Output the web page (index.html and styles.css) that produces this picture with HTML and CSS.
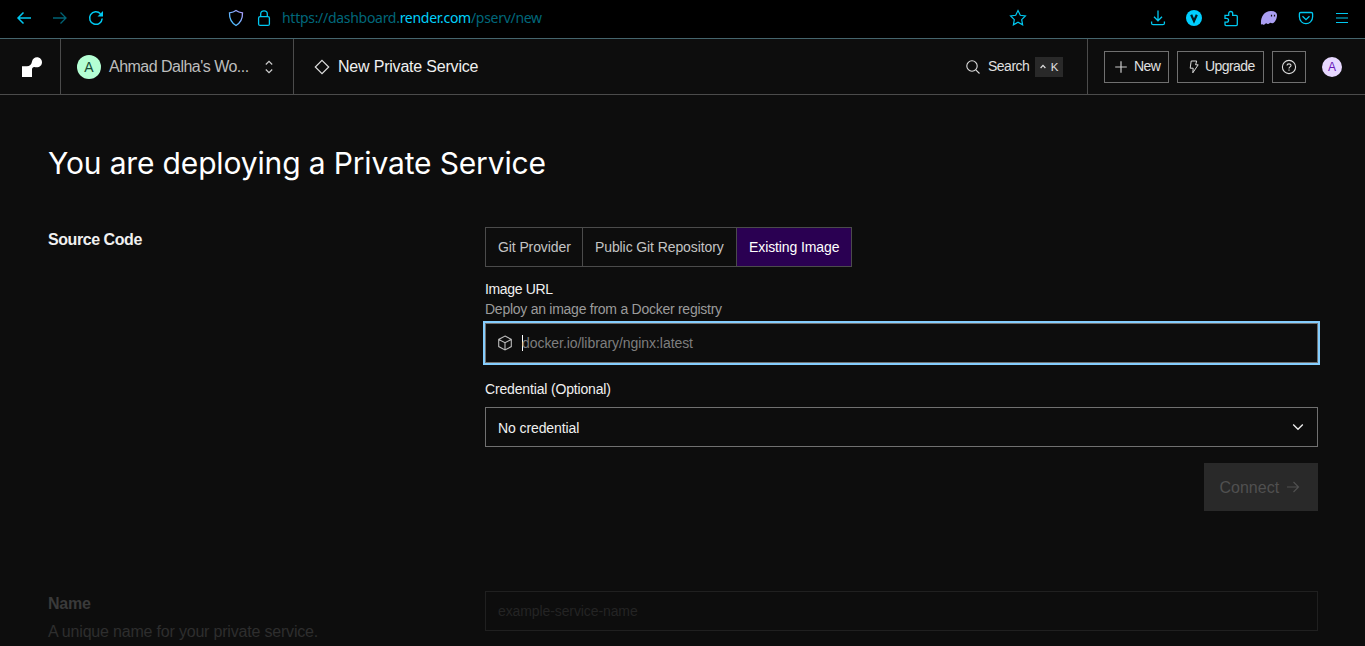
FILE: index.html
```html
<!DOCTYPE html>
<html lang="en">
<head>
<meta charset="utf-8">
<title>New Private Service</title>
<link rel="stylesheet" href="styles.css">
</head>
<body>
<div class="browser">
  <div class="nav-icons">
    <svg class="cyan" width="16" height="16" viewBox="0 0 16 16"><path d="M15 8H2M7.500 2.500 2 8l5.500 5.500" stroke-width="1.500"/></svg>
    <svg class="dim" width="16" height="16" viewBox="0 0 16 16"><path d="M1 8h13M8.500 2.500 14 8l-5.500 5.500" stroke-width="1.300"/></svg>
    <svg class="cyan" width="16" height="16" viewBox="0 0 16 16"><path d="M14.200 8.500A6.300 6.300 0 1 1 12.500 3.700" stroke-width="1.500"/><path class="solid" d="M15 1v5.500H9.500z"/></svg>
  </div>
  <div class="site-icons">
    <svg width="16" height="18" viewBox="0 0 16 18"><defs><linearGradient id="sg" x1="0" y1="1" x2="1" y2="0"><stop offset="0" stop-color="#35c5ff"/><stop offset="1" stop-color="#b59cff"/></linearGradient></defs><path d="M8 1.500c2 1.500 4 2 6.500 2.300.2 6-1.500 9.800-6.500 12.700C3 13.600 1.300 9.800 1.500 3.800 4 3.500 6 3 8 1.500z" stroke="url(#sg)" stroke-width="1.300"/></svg>
    <svg class="cyan" width="14" height="18" viewBox="0 0 14 18"><rect x="1.600" y="7.600" width="10.800" height="8.800" rx="1.500" stroke-width="1.300"/><path d="M3.700 7.500V4.800C3.700.8 10.300.8 10.300 4.800v2.700" stroke-width="1.300"/></svg>
  </div>
  <div class="url">https://dashboard.<span>render.com</span>/pserv/new</div>
  <svg class="cyan star" width="18" height="18" viewBox="0 0 18 18"><path d="m9 1.600 2.300 4.700 5.100.7-3.700 3.600.9 5.200L9 13.300l-4.600 2.500.9-5.200L1.600 7l5.100-.7z" stroke-width="1.200"/></svg>
  <div class="ext-icons">
    <svg class="cyan" width="16" height="16" viewBox="0 0 16 16"><path d="M8 .5v10M4 6.800l4 4 4-4M1.600 11.500v1.700c0 1 .5 1.500 1.500 1.500h9.800c1 0 1.500-.5 1.500-1.500v-1.700" stroke-width="1.300"/></svg>
    <svg width="16" height="16" viewBox="0 0 16 16"><circle cx="8" cy="8" r="8" fill="#00cfff"/><path d="M5.200 4.800 8 11l2.800-6.200" stroke="#001b22" stroke-width="2.200"/></svg>
    <svg class="cyan" width="16" height="17" viewBox="0 0 16 17"><path d="M2 5.300h3.700V3.500c0-2.700 4-2.700 4 0v1.800h3.500c.7 0 1.100.4 1.100 1.100v8.100c0 .7-.4 1.100-1.100 1.100H3.100c-.7 0-1.100-.4-1.100-1.100v-2.300h1.600c2.600 0 2.600-3.800 0-3.800H2z" stroke-width="1.300"/></svg>
    <svg width="18" height="16" viewBox="0 0 18 16"><path d="M1 14.500C.5 7 4 1 11 1c4 0 6 1.700 6 4 0 4-2 7.500-4.500 8.300-1 .3-1.500-.5-2.300-.5-.8.100-1 1.300-2 1.300s-1.200-.8-2-.8-1.400 1.400-2.400 1.400-1.200-.6-1.800-.5z" fill="#ab9ff2"/><path d="M11.500 4.800v1.800M14.500 4.800v1.800" stroke="#111" stroke-width="1.200"/></svg>
    <svg class="cyan" width="16" height="16" viewBox="0 0 16 16"><path d="M2.700 2.500h10.600c.8 0 1.300.5 1.300 1.300v3c0 9-13.200 9-13.200 0v-3c0-.8.500-1.300 1.300-1.300zM4.500 6.300 8 9.600l3.500-3.300" stroke-width="1.300"/></svg>
    <svg class="cyan" width="14" height="14" viewBox="0 0 14 14"><path d="M1 2.500h12M1 7h12M1 11.500h12" stroke-width="1.200"/></svg>
  </div>
</div>

<header class="header">
  <div class="logo"><svg width="20" height="20" viewBox="0 0 20 20"><path d="M15 .2C12.500.2 10.400 2 10 4.500 9.600 7.300 7.600 9.300 4.900 9.300H0V20h10v-7.500c0-1.500 1-2.600 2.400-2.500C17 11 20 8.700 20 5.200 20 2.400 17.800.2 15 .2z" fill="#fff"/></svg></div>
  <div class="workspace">
    <span class="avatar green">A</span>
    <span class="ws-name">Ahmad Dalha's Wo...</span>
    <svg width="8" height="14" viewBox="0 0 8 14"><path d="M.8 4.500 4 1.300l3.200 3.200M.8 9.500 4 12.700l3.200-3.200" stroke="#ccc" stroke-width="1.200"/></svg>
  </div>
  <div class="crumb">
    <svg width="16" height="16" viewBox="0 0 16 16"><path d="M8 1.300 14.700 8 8 14.700 1.300 8z" stroke="#ddd" stroke-width="1.200"/></svg>
    <span class="crumb-text">New Private Service</span>
  </div>
  <div class="search">
    <svg width="14" height="14" viewBox="0 0 14 14"><circle cx="6" cy="6" r="5.200" stroke="#ddd" stroke-width="1.100"/><path d="m9.800 9.800 3.700 3.700" stroke="#ddd" stroke-width="1.100"/></svg>
    <span class="search-text">Search</span>
    <span class="kbd"><svg width="6" height="5" viewBox="0 0 6 5"><path d="m.6 4 2.400-2.700L5.400 4" stroke="#ddd" stroke-width="1.200"/></svg>K</span>
  </div>
  <div class="actions">
    <span class="btn new"><svg width="12" height="12" viewBox="0 0 12 12"><path d="M6 .2v11.600M.2 6h11.600" stroke="#ccc" stroke-width="1.200"/></svg><span class="new-text">New</span></span>
    <span class="btn upgrade"><svg width="12" height="14" viewBox="0 0 12 14"><path d="M3.200 1h5.500L7.600 4.800h2.600L4.800 12.800l.4-4.600H2.200z" stroke="#ddd"/></svg><span class="upgrade-text">Upgrade</span></span>
    <span class="btn help"><svg width="16" height="16" viewBox="0 0 16 16"><circle cx="8" cy="8" r="6.600" stroke="#ddd" stroke-width="1.100"/><path d="M6 6.600C6 4.300 10 4.300 10 6.500c0 1.500-2 1.300-2 2.900M8 10.500v1.200" stroke="#ddd" stroke-width="1.100"/></svg></span>
    <span class="avatar lilac">A</span>
  </div>
</header>

<main>
  <h1>You are deploying a Private Service</h1>
  <section class="row source">
    <h2 class="source-title">Source Code</h2>
    <div class="fields">
      <div class="tabs"><span class="tab t1">Git Provider</span><span class="tab t2">Public Git Repository</span><span class="tab t3 active">Existing Image</span></div>
      <div class="label url-label">Image URL</div>
      <div class="hint">Deploy an image from a Docker registry</div>
      <div class="input focused">
        <svg width="16" height="16" viewBox="0 0 16 16"><path d="M8 1.100 14.300 4.400v7.200L8 14.900l-6.300-3.300V4.400zM1.700 4.400 8 7.700l6.300-3.300M8 7.700v7.200" stroke="#bbb" stroke-width="1.100"/></svg>
        <span class="caret"></span><span class="docker-text">docker.io/library/nginx:latest</span>
      </div>
      <div class="label cred-label">Credential (Optional)</div>
      <div class="input select"><span class="nocred">No credential</span><svg width="12" height="8" viewBox="0 0 12 8"><path d="m1.200 1.500 4.800 4.800 4.800-4.800" stroke="#eee" stroke-width="1.300"/></svg></div>
      <div class="connect"><span class="connect-text">Connect</span><svg width="14" height="12" viewBox="0 0 14 12"><path d="M1 6h11.500M7.500 1l5 5-5 5" stroke="#505050" stroke-width="1.200"/></svg></div>
    </div>
  </section>
  <section class="row name">
    <div><h2 class="name-title">Name</h2><p class="name-hint">A unique name for your private service.</p></div>
    <div class="fields"><div class="input muted"><span class="example">example-service-name</span></div></div>
  </section>
</main>
</body>
</html>
```
FILE: styles.css
```css
* { box-sizing: border-box; }
body { margin: 0; height: 646px; overflow: hidden; background: #0d0d0d; color: #fff; font-family: "Liberation Sans", Arial, sans-serif; font-size: 14px; }
svg { fill: none; flex: none; display: block; }
h1, h2, p { margin: 0; font-weight: 400; }
span { white-space: nowrap; }
.cyan { stroke: #00c8f0; }
.dim { stroke: #006375; }
.solid { fill: #00c8f0; stroke: none; }

.browser { height: 39px; background: #000; border-bottom: 1px solid #45656d; display: flex; align-items: center; padding: 0 16px 2px; }
.nav-icons { display: flex; gap: 20px; width: 212px; }
.site-icons { display: flex; gap: 13px; align-items: center; width: 54px; }
.url { font: 14px/20px "Noto Sans", sans-serif; letter-spacing: -0.29px; color: #00677a; width: 728px; }
.url span { color: #00d0fa; }
.star { margin-left: -1px; }
.ext-icons { display: flex; align-items: center; gap: 20.700px; margin-left: auto; }

.header { height: 56px; border-bottom: 1px solid #4b4b4b; display: flex; align-items: stretch; }
.header > div { display: flex; align-items: center; }
.header > .logo { width: 61px; padding-left: 22px; border-right: 1px solid #4b4b4b; }
.workspace { width: 233px; padding-left: 16px; border-right: 1px solid #4b4b4b; }
.avatar { border-radius: 50%; display: flex; align-items: center; justify-content: center; flex: none; }
.green { width: 24px; height: 24px; background: #b4ffd4; color: #164b35; font-size: 14px; }
.lilac { width: 20px; height: 20px; margin-left: 8px; background: #e7d8ff; color: #6716b8; font-size: 12px; }
.ws-name { margin-left: 8px; width: 156px; font-size: 16px; letter-spacing: -0.52px; color: #bdbdbd; }
.crumb { padding-left: 20px; gap: 8px; font-size: 16px; letter-spacing: -0.200px; color: #f0f0f0; }
.search { margin-left: auto; width: 121px; color: #e0e0e0; }
.search-text { margin-left: 8px; width: 47px; letter-spacing: -0.500px; padding-bottom: 1px; }
.kbd { width: 28px; height: 20px; background: #292929; display: flex; align-items: center; justify-content: center; gap: 5px; font-size: 11.500px; }
.actions { width: 278px; border-left: 1px solid #4b4b4b; padding-left: 16px; gap: 8px; }
.btn { height: 32px; border: 1px solid #707070; display: flex; align-items: center; color: #e0e0e0; }
.btn > span { padding-bottom: 1px; }
.new { width: 65px; padding-left: 10px; gap: 7px; letter-spacing: -0.600px; }
.upgrade { width: 87px; padding-left: 10px; gap: 5px; letter-spacing: -0.570px; }
.help { width: 34px; justify-content: center; }

main { padding: 48px 47px 0 48px; }
h1 { font: 400 30px/40px Inter, sans-serif; letter-spacing: -0.150px; height: 84px; }
.row { display: grid; grid-template-columns: 437px 833px; }
h2 { font-size: 16px; line-height: 24px; font-weight: 700; color: #f0f0f0; padding-top: 1px; }
.source { height: 364px; }
.source-title { letter-spacing: -0.440px; }
.tabs { display: flex; width: 367px; height: 40px; border: 1px solid #4b4b4b; color: #c4c4c4; letter-spacing: -0.100px; }
.tab { padding-left: 12px; line-height: 38px; border-right: 1px solid #4b4b4b; }
.t1 { width: 97px; }
.t2 { width: 154px; }
.t3 { width: 114px; border: 0; }
.active { background: #2a0052; color: #fff; }
.label { line-height: 20px; color: #f0f0f0; }
.url-label { margin-top: 12px; letter-spacing: -0.350px; }
.hint { line-height: 20px; color: #9b9b9b; margin-bottom: 4px; letter-spacing: -0.260px; }
.input { height: 40px; border: 1px solid #707070; display: flex; align-items: center; padding: 0 12px; }
.focused { outline: 2px solid #85ceff; color: #7e7e7e; padding-left: 11px; }
.caret { width: 1px; height: 16px; background: #fff; margin: 0 -1px 0 9px; }
.docker-text { letter-spacing: -0.060px; }
.cred-label { margin: 16px 0 8px; letter-spacing: -0.160px; }
.select { justify-content: space-between; color: #f0f0f0; padding-right: 13px; letter-spacing: -0.100px; }
.nocred { padding-top: 2px; }
.connect { margin: 16px 0 0 auto; width: 114px; height: 48px; background: #292929; color: #505050; display: flex; align-items: center; padding-left: 15.500px; gap: 7px; font-size: 16px; }
.connect-text { padding-top: 2px; }
.name-title { color: #3a3a3a; letter-spacing: -0.250px; }
.name-hint { font-size: 16px; line-height: 24px; margin-top: 4px; color: #2e2e2e; letter-spacing: -0.190px; }
.muted { border-color: #202020; color: #242424; letter-spacing: -0.100px; }
```
